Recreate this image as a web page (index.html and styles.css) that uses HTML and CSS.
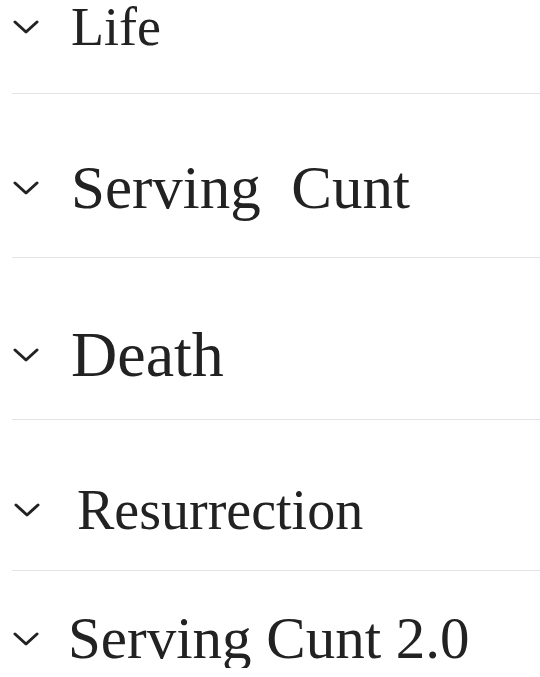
FILE: index.html
```html
<!DOCTYPE html>
<html lang="en">
<head>
  <meta charset="UTF-8" />
  <title>Sections</title>
  <link rel="stylesheet" href="styles.css">
</head>
<body>

  <div class="sections">
    <div class="section section-life">
      <h2 class="section-title">
        <svg class="chevron" viewBox="0 0 26 14"><path d="M2 2 L13 12 L24 2" /></svg>
        <span>Life</span>
      </h2>
    </div>

    <div class="section section-serving">
      <h2 class="section-title">
        <svg class="chevron" viewBox="0 0 26 14"><path d="M2 2 L13 12 L24 2" /></svg>
        <span>Serving&nbsp; Cunt</span>
      </h2>
    </div>

    <div class="section section-death">
      <h2 class="section-title">
        <svg class="chevron" viewBox="0 0 26 14"><path d="M2 2 L13 12 L24 2" /></svg>
        <span>Death</span>
      </h2>
    </div>

    <div class="section section-resurrection">
      <h2 class="section-title">
        <svg class="chevron" viewBox="0 0 26 14"><path d="M2 2 L13 12 L24 2" /></svg>
        <span>Resurrection</span>
      </h2>
    </div>

    <div class="section section-serving2">
      <h2 class="section-title">
        <svg class="chevron" viewBox="0 0 26 14"><path d="M2 2 L13 12 L24 2" /></svg>
        <span>Serving Cunt 2.0</span>
      </h2>
    </div>
  </div>

</body>
</html>
```

FILE: styles.css
```css
body {
  margin: 0;
  background: #ffffff;
  color: #222222;
  font-family: "Liberation Serif", "Times New Roman", serif;
  overflow: hidden;
}

.sections {
  padding-left: 12px;
}

.section {
  border-bottom: 1px solid #e4e4e8;
}

.section:last-child {
  border-bottom: none;
}

.section-title {
  display: flex;
  align-items: center;
  margin: 0;
  font-size: 1em;
  font-weight: normal;
  line-height: 1;
  white-space: nowrap;
}

.chevron {
  flex: none;
  width: 26px;
  height: 14px;
  margin-left: 1px;
  margin-right: 32px;
}

.chevron path {
  fill: none;
  stroke: #222222;
  stroke-width: 3;
  stroke-linecap: round;
  stroke-linejoin: round;
}

/* each heading was cut from a different screenshot, so sizes differ */
.section-life {
  padding-bottom: 39px;
  font-size: 54px;
}

.section-serving {
  padding-top: 63px;
  padding-bottom: 39px;
  font-size: 61px;
}

.section-death {
  padding-top: 65px;
  padding-bottom: 32px;
  font-size: 64px;
}

.section-resurrection {
  padding-top: 62px;
  padding-bottom: 32px;
  font-size: 56px;
}

.section-resurrection .chevron {
  margin-left: 2px;
  margin-right: 37px;
}

.section-serving2 {
  padding-top: 38px;
  font-size: 59px;
}

.section-serving2 .chevron {
  margin-right: 29px;
}
```
